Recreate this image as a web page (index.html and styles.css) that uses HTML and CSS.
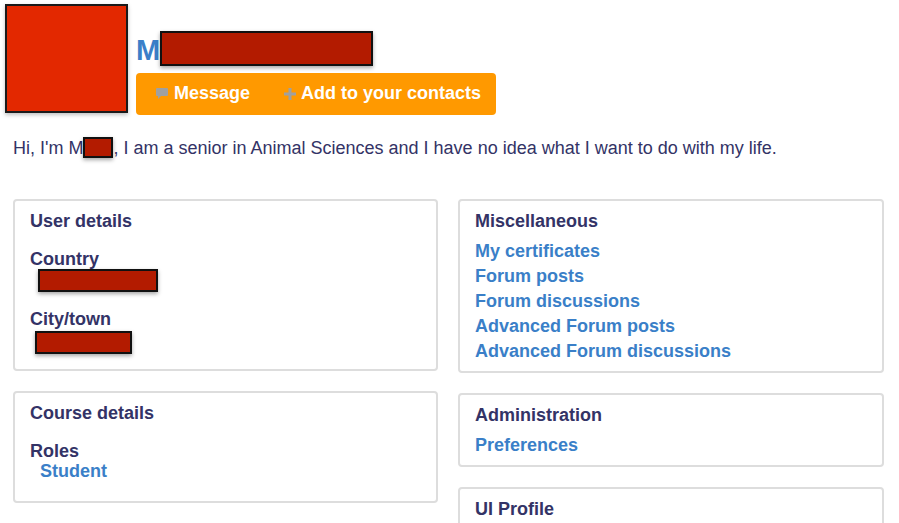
FILE: index.html
```html
<!DOCTYPE html>
<html lang="en">
<head>
    <meta charset="UTF-8">
    <meta name="viewport" content="width=device-width, initial-scale=1.0">
    <title>User profile</title>
    <link rel="stylesheet" href="styles.css">
</head>
<body>

<div class="page">
    <header class="profile-header">
        <div class="avatar"></div>
        <div class="profile-main">
            <h1 class="user-name">M<span class="redact redact-name"></span></h1>
            <div class="actions">
                <a href="#" class="action action-message">
                    <svg class="action-icon" width="12" height="12" viewBox="0 0 12 12"><path d="M0 1q0-1 1-1h10q1 0 1 1v6q0 1-1 1H5L2 11V8H1q-1 0-1-1z" fill="#a0a0a0"/></svg>Message
                </a>
                <a href="#" class="action action-add">
                    <svg class="action-icon" width="12" height="12" viewBox="0 0 12 12"><path d="M4.500 0h3v4.500H12v3H7.500V12h-3V7.500H0v-3h4.500z" fill="#a0a0a0"/></svg>Add to your contacts
                </a>
            </div>
        </div>
    </header>

    <p class="bio">Hi, I'm M<span class="redact redact-bio"></span>, I am a senior in Animal Sciences and I have no idea what I want to do with my life.</p>

    <div class="columns">
        <div class="column">
            <section class="box box-user">
                <h3>User details</h3>
                <dl>
                    <dt>Country</dt>
                    <dd><span class="redact redact-country"></span></dd>
                    <dt class="second">City/town</dt>
                    <dd class="city"><span class="redact redact-city"></span></dd>
                </dl>
            </section>
            <section class="box box-course">
                <h3>Course details</h3>
                <dl>
                    <dt>Roles</dt>
                    <dd class="role"><a href="#">Student</a></dd>
                </dl>
            </section>
        </div>
        <div class="column">
            <section class="box box-misc">
                <h3>Miscellaneous</h3>
                <ul>
                    <li><a href="#">My certificates</a></li>
                    <li><a href="#">Forum posts</a></li>
                    <li><a href="#">Forum discussions</a></li>
                    <li><a href="#">Advanced Forum posts</a></li>
                    <li><a href="#">Advanced Forum discussions</a></li>
                </ul>
            </section>
            <section class="box box-admin">
                <h3>Administration</h3>
                <ul>
                    <li><a href="#">Preferences</a></li>
                </ul>
            </section>
            <section class="box box-ui">
                <h3>UI Profile</h3>
            </section>
        </div>
    </div>
</div>

</body>
</html>
```

FILE: styles.css
```css
html, body {
    margin: 0;
    padding: 0;
    height: 523px;
    overflow: hidden;
}
body {
    font-family: "Liberation Sans", Arial, sans-serif;
    font-size: 18px;
    color: #333366;
    background-color: #fff;
}
a {
    color: #3a7fc8;
    text-decoration: none;
}
.page {
    padding: 4px 15px 0 13px;
}
.redact {
    display: inline-block;
    box-sizing: border-box;
    background-color: #b31b00;
    border: 2px solid #111;
    box-shadow: 0 2px 4px rgba(0, 0, 0, 0.35);
}
.profile-header {
    display: flex;
    gap: 8px;
    margin-left: -8px;
}
.avatar {
    width: 123px;
    height: 109px;
    box-sizing: border-box;
    background-color: #e32800;
    border: 2px solid #1a1a1a;
    box-shadow: 0 2px 4px rgba(0, 0, 0, 0.25);
    flex-shrink: 0;
}
.profile-main {
    padding-top: 27px;
}
.user-name {
    margin: 0;
    height: 42px;
    font-size: 29px;
    line-height: 39px;
    color: #3a7fc8;
    display: flex;
    align-items: flex-start;
}
.redact-name {
    width: 213px;
    height: 35px;
}
.actions {
    display: flex;
    width: 360px;
    height: 42px;
    box-sizing: border-box;
    padding-left: 20px;
    align-items: center;
    background-color: #ff9900;
    border-radius: 4px;
}
.action {
    display: flex;
    align-items: center;
    color: #fff;
    font-weight: bold;
    font-size: 18px;
    line-height: 24px;
    margin-top: -2px;
}
.action-icon {
    margin: 2px 6px 0 0;
}
.action-add .action-icon {
    margin-right: 5px;
}
.action-message {
    margin-right: 34px;
}
.bio {
    margin: 21px 0 0;
    line-height: 24px;
    white-space: nowrap;
}
.redact-bio {
    width: 30px;
    height: 21px;
    vertical-align: -4px;
}
.columns {
    display: grid;
    grid-template-columns: 425px 426px;
    gap: 20px;
    margin-top: 39px;
}
.column {
    display: flex;
    flex-direction: column;
    gap: 20px;
}
.box {
    box-sizing: border-box;
    border: 2px solid #dddddd;
    border-radius: 4px;
    padding: 10px 15px;
}
.box h3 {
    margin: 0;
    font-size: 18px;
    line-height: 21px;
    font-weight: bold;
}
.box-user { height: 172px; }
.box-course { height: 112px; }
.box-misc { height: 174px; }
.box-admin { height: 74px; }
.box-ui { height: 60px; }
.box dl {
    margin: 17px 0 0;
}
.box dt {
    font-weight: bold;
    line-height: 20px;
}
.box dt.second {
    margin-top: 14px;
}
.box dd {
    margin: 0;
    line-height: 20px;
    height: 26px;
}
.box dd.city {
    padding-top: 2px;
}
.box dd.role {
    margin-left: 10px;
    font-weight: bold;
}
.redact-country {
    width: 120px;
    height: 23px;
    margin-left: 8px;
}
.redact-city {
    width: 97px;
    height: 23px;
    margin-left: 5px;
}
.box ul {
    list-style: none;
    margin: 7px 0 0;
    padding: 0;
}
.box li {
    line-height: 25px;
    font-weight: bold;
}
```
